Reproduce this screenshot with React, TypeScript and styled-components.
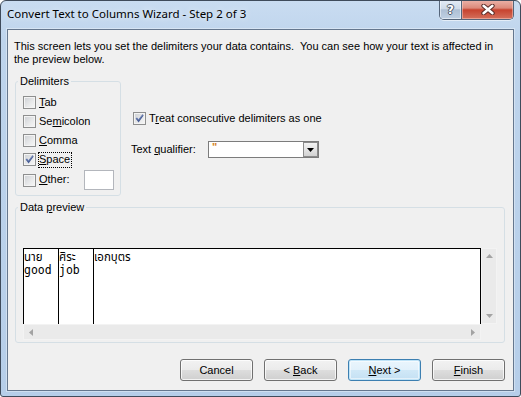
import React from "react";
import styled, { createGlobalStyle, css } from "styled-components";

const GlobalStyle = createGlobalStyle`
  html, body { margin: 0; padding: 0; background: #ffffff; }
  * { box-sizing: border-box; }
`;

const DIALOG_FONT = `"Liberation Sans", Arial, sans-serif`;

const Window = styled.div`
  width: 521px;
  height: 397px;
  border: 1px solid #3f4b5b;
  border-radius: 6px 6px 3px 3px;
  background: linear-gradient(180deg, #c9dcf1 0%, #bed4ec 10%, #b6cee9 100%);
  padding: 0 6px 5px;
  display: flex;
  flex-direction: column;
  overflow: hidden;
  font-family: ${DIALOG_FONT};
  font-size: 11px;
  color: #000;
`;

const TitleBar = styled.div`
  height: 28px;
  flex: none;
  display: flex;
  align-items: flex-start;
`;

const Title = styled.div`
  font-family: "Noto Sans", "Open Sans", sans-serif;
  font-size: 11.5px;
  line-height: 16px;
  padding-top: 5px;
  white-space: nowrap;
  text-shadow: 0 0 6px rgba(255, 255, 255, 0.9);
`;

const CaptionButtons = styled.div`
  margin-left: auto;
  margin-top: -1px;
  height: 20px;
  display: flex;
  border: 1px solid #55657a;
  border-top: none;
  border-radius: 0 0 5px 5px;
  overflow: hidden;
  box-shadow: 0 1px 0 rgba(255, 255, 255, 0.55);
`;

const CaptionButton = styled.div<{ $variant: "help" | "close" }>`
  height: 100%;
  display: flex;
  align-items: center;
  justify-content: center;
  ${(p) =>
    p.$variant === "help"
      ? css`
          width: 22px;
          border-right: 1px solid #55657a;
          background: linear-gradient(180deg, #e4ecf6 0%, #cfdbe9 45%, #aebfd4 52%, #bfd0e3 100%);
          box-shadow: inset 0 0 0 1px rgba(255, 255, 255, 0.5);
        `
      : css`
          width: 51px;
          background: linear-gradient(180deg, #ecb4aa 0%, #dc8a7b 42%, #c7432f 52%, #d4705c 100%);
          box-shadow: inset 0 0 0 1px rgba(255, 220, 210, 0.45);
        `}
`;

const HelpGlyph = styled.span`
  font-family: "DejaVu Sans", sans-serif;
  font-weight: bold;
  font-size: 12px;
  line-height: 12px;
  color: #ffffff;
  text-shadow: 1px 0 0 #4a5666, -1px 0 0 #4a5666, 0 1px 0 #4a5666, 0 -1px 0 #4a5666;
`;

const Client = styled.div`
  flex: 1;
  border: 1px solid #65778e;
  background: #f0f0f0;
  padding: 10px 8px 9px 7px;
  display: flex;
  flex-direction: column;
  box-shadow: 0 0 0 1px rgba(255, 255, 255, 0.35);
`;

const Description = styled.p`
  margin: 0 0 9px -1px;
  line-height: 13px;
`;

const TopRow = styled.div`
  display: flex;
  align-items: flex-start;
  gap: 10px;
`;

const GroupBox = styled.fieldset<{ $width?: number }>`
  margin: 0;
  padding: 0;
  min-width: 0;
  border: 1px solid #d5dfe5;
  border-radius: 3px;
  ${(p) => (p.$width ? `width: ${p.$width}px;` : "")}
`;

const Legend = styled.legend`
  margin-left: 2px;
  padding: 0 2px;
  line-height: 13px;
`;

const GroupBody = styled.div<{ $pad: string }>`
  padding: ${(p) => p.$pad};
  display: flex;
  flex-direction: column;
`;

const OptionRow = styled.div<{ $height?: number; $indent?: number }>`
  display: flex;
  align-items: center;
  height: ${(p) => p.$height ?? 19}px;
  padding-left: ${(p) => p.$indent ?? 0}px;
`;

const Box = styled.span`
  width: 13px;
  height: 13px;
  flex: none;
  margin-right: 2px;
  border: 1px solid #8e8f8f;
  background: linear-gradient(135deg, #cdd0d4 0%, #e9eaeb 60%, #f7f7f7 100%);
  box-shadow: inset 0 0 0 1px #f4f4f4;
  display: flex;
  align-items: center;
  justify-content: center;
`;

const Label = styled.span<{ $focused?: boolean }>`
  border: 1px dotted ${(p) => (p.$focused ? "#000" : "transparent")};
  padding: 0 1px 1px 0;
  line-height: 13px;
  white-space: nowrap;
`;

const U = styled.span`
  text-decoration: underline;
`;

const OtherInput = styled.div`
  width: 30px;
  height: 20px;
  margin-left: auto;
  background: #ffffff;
  border: 1px solid #b3b6bc;
`;

const Options = styled.div`
  padding-top: 34px;
  display: flex;
  flex-direction: column;
`;

const QualifierRow = styled.div`
  margin-top: 13px;
  height: 17px;
  display: flex;
  align-items: center;
`;

const QualifierLabel = styled.span`
  width: 77px;
  line-height: 13px;
  white-space: nowrap;
`;

const Combo = styled.div`
  width: 111px;
  height: 17px;
  background: #ffffff;
  border: 1px solid #7c7c7c;
  display: flex;
  justify-content: space-between;
`;

const ComboValue = styled.span`
  color: #d4801f;
  font-weight: bold;
  padding-left: 3px;
  line-height: 11px;
`;

const DropButton = styled.div`
  width: 15px;
  height: 15px;
  border: 1px solid #8b8b8b;
  background: linear-gradient(180deg, #f3f3f3 0%, #e4e4e4 50%, #d2d2d2 100%);
  display: flex;
  align-items: center;
  justify-content: center;
`;

const PreviewGroup = styled(GroupBox)`
  margin-top: 5px;
`;

const Preview = styled.div`
  display: grid;
  grid-template-columns: 1fr 16px;
  grid-template-rows: 76px 16px;
  height: 92px;
`;

const DataArea = styled.div`
  border: 1px solid #000000;
  border-bottom: none;
  background: #ffffff;
  display: flex;
  font-family: "DejaVu Sans Mono", "Liberation Mono", "Noto Sans Thai", "Noto Sans", monospace;
  font-size: 11.5px;
  line-height: 13px;
  overflow: hidden;
`;

const DataColumn = styled.div<{ $last?: boolean }>`
  padding-top: 2px;
  white-space: pre;
  ${(p) =>
    p.$last
      ? css`
          flex: 1;
        `
      : css`
          width: 35px;
          flex: none;
          border-right: 1px solid #000000;
        `}
`;

const ScrollBar = styled.div<{ $dir: "v" | "h" }>`
  background: #eaeaea;
  box-shadow: inset 0 0 0 1px #f3f3f3;
  display: flex;
  flex-direction: ${(p) => (p.$dir === "v" ? "column" : "row")};
  justify-content: space-between;
  align-items: center;
`;

const ArrowCell = styled.div`
  width: 16px;
  height: 16px;
  display: flex;
  align-items: center;
  justify-content: center;
`;

const Corner = styled.div`
  background: #f0f0f0;
`;

const ButtonRow = styled.div`
  margin-top: 16px;
  display: flex;
  justify-content: flex-end;
  gap: 11px;
`;

const Button = styled.button<{ $default?: boolean }>`
  width: 73px;
  height: 22px;
  padding: 0;
  font-family: ${DIALOG_FONT};
  font-size: 11px;
  color: #000;
  border-radius: 3px;
  border: 1px solid #707070;
  background: linear-gradient(180deg, #f2f2f2 0%, #ebebeb 48%, #dddddd 52%, #cfcfcf 100%);
  box-shadow: inset 0 0 0 1px rgba(255, 255, 255, 0.75);
  ${(p) =>
    p.$default &&
    css`
      border-color: #3c7fb1;
      background: linear-gradient(180deg, #eaf6fd 0%, #e2f1fb 48%, #d0e8f7 52%, #c4e0f3 100%);
      box-shadow: inset 0 0 0 1px #bfe3f7, inset 0 0 0 2px rgba(255, 255, 255, 0.5);
    `}
`;

const Check = () => (
  <svg width="9" height="9" viewBox="0 0 9 9">
    <path d="M0.6 4.6 L2 3.4 L3.5 5.3 L7.6 0.3 L8.6 1.4 L3.6 8.4 Z" fill="#4a5f97" />
    <path d="M1.2 4.6 L2 4 L3.5 6 L7.8 0.9" stroke="#8fa3cf" strokeWidth="0.5" fill="none" />
  </svg>
);

const Checkbox = ({ checked }: { checked?: boolean }) => <Box>{checked ? <Check /> : null}</Box>;

const CloseGlyph = () => (
  <svg width="14" height="11" viewBox="0 0 14 11">
    <path d="M2.5 1.8 L11.5 9.2 M11.5 1.8 L2.5 9.2" stroke="#5a2c28" strokeWidth="4.4" strokeLinecap="round" />
    <path d="M2.5 1.8 L11.5 9.2 M11.5 1.8 L2.5 9.2" stroke="#ffffff" strokeWidth="2.4" strokeLinecap="round" />
  </svg>
);

const Arrow = ({ dir }: { dir: "up" | "down" | "left" | "right" }) => {
  const pts = {
    up: "0,4 3.5,0 7,4",
    down: "0,0 3.5,4 7,0",
    left: "4,0 0,3.5 4,7",
    right: "0,0 4,3.5 0,7",
  }[dir];
  const vertical = dir === "up" || dir === "down";
  return (
    <svg width={vertical ? 7 : 4} height={vertical ? 4 : 7} viewBox={vertical ? "0 0 7 4" : "0 0 4 7"}>
      <polygon points={pts} fill="#a3a3a3" />
    </svg>
  );
};

export default function App() {
  return (
    <>
      <GlobalStyle />
      <Window>
        <TitleBar>
          <Title>Convert Text to Columns Wizard - Step 2 of 3</Title>
          <CaptionButtons>
            <CaptionButton $variant="help">
              <HelpGlyph>?</HelpGlyph>
            </CaptionButton>
            <CaptionButton $variant="close">
              <CloseGlyph />
            </CaptionButton>
          </CaptionButtons>
        </TitleBar>
        <Client>
          <Description>
            This screen lets you set the delimiters your data contains.&nbsp; You can see how your text is affected in
            <br />
            the preview below.
          </Description>
          <TopRow>
            <GroupBox $width={106}>
              <Legend>Delimiters</Legend>
              <GroupBody $pad="5px 6px 4px 7px">
                <OptionRow>
                  <Checkbox />
                  <Label>
                    <U>T</U>ab
                  </Label>
                </OptionRow>
                <OptionRow>
                  <Checkbox />
                  <Label>
                    Se<U>m</U>icolon
                  </Label>
                </OptionRow>
                <OptionRow>
                  <Checkbox />
                  <Label>
                    <U>C</U>omma
                  </Label>
                </OptionRow>
                <OptionRow>
                  <Checkbox checked />
                  <Label $focused>
                    <U>S</U>pace
                  </Label>
                </OptionRow>
                <OptionRow $height={22}>
                  <Checkbox />
                  <Label>
                    <U>O</U>ther:
                  </Label>
                  <OtherInput />
                </OptionRow>
              </GroupBody>
            </GroupBox>
            <Options>
              <OptionRow $indent={2}>
                <Checkbox checked />
                <Label>
                  T<U>r</U>eat consecutive delimiters as one
                </Label>
              </OptionRow>
              <QualifierRow>
                <QualifierLabel>
                  Text <U>q</U>ualifier:
                </QualifierLabel>
                <Combo>
                  <ComboValue>"</ComboValue>
                  <DropButton>
                    <svg width="7" height="4" viewBox="0 0 7 4">
                      <polygon points="0,0 7,0 3.5,4" fill="#000" />
                    </svg>
                  </DropButton>
                </Combo>
              </QualifierRow>
            </Options>
          </TopRow>
          <PreviewGroup>
            <Legend>
              Data <U>p</U>review
            </Legend>
            <GroupBody $pad="34px 7px 2px 7px">
              <Preview>
                <DataArea>
                  <DataColumn>{"นาย\ngood"}</DataColumn>
                  <DataColumn>{"ศิระ\njob"}</DataColumn>
                  <DataColumn $last>{"เอกบุตร"}</DataColumn>
                </DataArea>
                <ScrollBar $dir="v">
                  <ArrowCell>
                    <Arrow dir="up" />
                  </ArrowCell>
                  <ArrowCell>
                    <Arrow dir="down" />
                  </ArrowCell>
                </ScrollBar>
                <ScrollBar $dir="h">
                  <ArrowCell>
                    <Arrow dir="left" />
                  </ArrowCell>
                  <ArrowCell>
                    <Arrow dir="right" />
                  </ArrowCell>
                </ScrollBar>
                <Corner />
              </Preview>
            </GroupBody>
          </PreviewGroup>
          <ButtonRow>
            <Button>Cancel</Button>
            <Button>
              &lt; <U>B</U>ack
            </Button>
            <Button $default>
              <U>N</U>ext &gt;
            </Button>
            <Button>
              <U>F</U>inish
            </Button>
          </ButtonRow>
        </Client>
      </Window>
    </>
  );
}
